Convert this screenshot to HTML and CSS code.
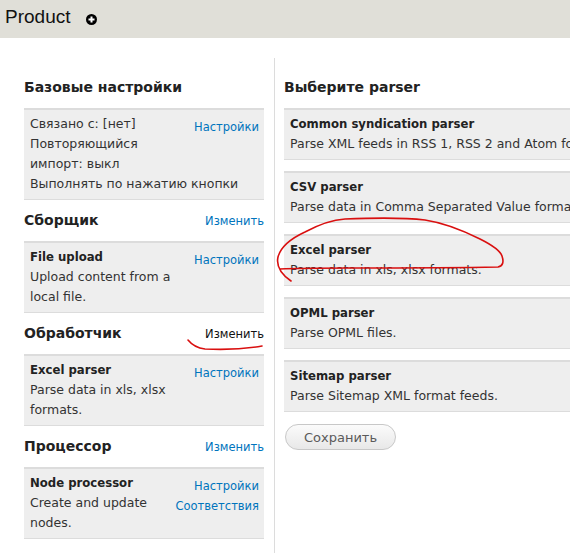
FILE: index.html
```html
<!DOCTYPE html>
<html>
<head>
<meta charset="utf-8">
<link rel="stylesheet" href="styles.css">
</head>
<body>
<header class="top">
  <h1 class="title">Product</h1>
  <svg class="plus" width="11" height="11" viewBox="0 0 11 11"><circle cx="5.5" cy="5.5" r="5.5" fill="#000"/><path d="M5.5 2.5v6M2.5 5.5h6" stroke="#fff" stroke-width="2"/></svg>
</header>
<div class="main">
  <div class="left">
    <div class="sec-head"><h2>Базовые настройки</h2></div>
    <div class="box">
      <div class="links"><a href="#">Настройки</a></div>
      <div class="txt">Связано с: [нет]<br>Повторяющийся<br>импорт: выкл<br>Выполнять по нажатию кнопки</div>
    </div>

    <div class="sec-head"><h2>Сборщик</h2><a href="#" class="change">Изменить</a></div>
    <div class="box">
      <div class="links"><a href="#">Настройки</a></div>
      <div class="txt"><b>File upload</b><br>Upload content from a<br>local file.</div>
    </div>

    <div class="sec-head"><h2>Обработчик</h2><a href="#" class="change dark">Изменить</a></div>
    <div class="box">
      <div class="links"><a href="#">Настройки</a></div>
      <div class="txt"><b>Excel parser</b><br>Parse data in xls, xlsx<br>formats.</div>
    </div>

    <div class="sec-head"><h2>Процессор</h2><a href="#" class="change">Изменить</a></div>
    <div class="box">
      <div class="links"><a href="#">Настройки</a><a href="#">Соответствия</a></div>
      <div class="txt"><b>Node processor</b><br>Create and update<br>nodes.</div>
    </div>
  </div>

  <div class="right">
    <div class="sec-head"><h2>Выберите parser</h2></div>
    <div class="box opt"><div class="txt"><b>Common syndication parser</b><br>Parse XML feeds in RSS 1, RSS 2 and Atom format feeds.</div></div>
    <div class="box opt"><div class="txt"><b>CSV parser</b><br>Parse data in Comma Separated Value format.</div></div>
    <div class="box opt"><div class="txt"><b>Excel parser</b><br>Parse data in xls, xlsx formats.</div></div>
    <div class="box opt"><div class="txt"><b>OPML parser</b><br>Parse OPML files.</div></div>
    <div class="box opt"><div class="txt"><b>Sitemap parser</b><br>Parse Sitemap XML format feeds.</div></div>
    <button class="save">Сохранить</button>
  </div>
</div>
<svg class="marks" width="570" height="553" viewBox="0 0 570 553">
  <path d="M291 281 C281 274 276 266 278 257 C281 246 292 238 305 232 C318 225 330 220 345 219 C370 218 400 217 425 220 C445 223 462 230 480 239 C492 245 500 250 502 256 C504 262 503 266 498 267 C450 268 400 268 350 268 C320 268 300 268 280 269" fill="none" stroke="#d90f0f" stroke-width="1.6" stroke-linecap="round"/>
  <path d="M188 340 C192 345 197 348 205 349 C225 350 245 349 262 346" fill="none" stroke="#d90f0f" stroke-width="1.6" stroke-linecap="round"/>
</svg>
</body>
</html>
```
FILE: styles.css
```css
html, body {
  margin: 0;
  padding: 0;
}
body {
  width: 570px;
  height: 553px;
  overflow: hidden;
  position: relative;
  background: #fff;
  font-family: "DejaVu Sans", Verdana, sans-serif;
  font-size: 12.5px;
  color: #333;
}
.top {
  height: 38px;
  background: #e0dfd8;
  display: flex;
  align-items: center;
  padding-left: 5px;
  gap: 16px;
}
.title {
  margin: 0;
  font-family: "Liberation Sans", Arial, sans-serif;
  font-weight: normal;
  font-size: 19px;
  color: #111;
  line-height: 1;
  position: relative;
  top: -3px;
}
.plus {
  display: block;
}
.main {
  display: flex;
  padding-top: 20px;
}
.left {
  width: 240px;
  flex: none;
  margin-left: 24px;
  padding: 9px 10px 0 0;
  border-right: 1px solid #dcdcdc;
  min-height: 520px;
}
.right {
  width: 330px;
  flex: none;
  margin-left: 9px;
  padding-top: 9px;
}
.sec-head {
  display: flex;
  justify-content: space-between;
  align-items: baseline;
  padding: 10px 0 11px;
}
.sec-head h2 {
  margin: 0;
  font-size: 14px;
  line-height: 20px;
  font-weight: bold;
  color: #222;
}
a {
  color: #0074bd;
  text-decoration: none;
}
.change {
  font-size: 11.5px;
}
.change.dark {
  color: #111;
}
.box {
  background: #eeeeee;
  border-top: 2px solid #dcdcdc;
  border-bottom: 1px solid #dcdcdc;
  padding: 4px 5px 5px 6px;
  line-height: 20px;
}
.box b {
  color: #222;
  font-size: 11.7px;
}
.txt {
  white-space: nowrap;
}
.links {
  float: right;
  padding-top: 3px;
  display: flex;
  flex-direction: column;
  align-items: flex-end;
  font-size: 11.5px;
}
.opt {
  margin-bottom: 11px;
}
.save {
  margin-top: 1px;
  margin-left: 1px;
  width: 111px;
  height: 26px;
  border: 1px solid #c8c8c8;
  border-radius: 13px;
  background: linear-gradient(#fbfbfb, #e8e8e8);
  font-family: "DejaVu Sans", Verdana, sans-serif;
  font-size: 13px;
  color: #5a5a5a;
  padding: 0;
}
.marks {
  position: absolute;
  left: 0;
  top: 0;
  pointer-events: none;
}
```
